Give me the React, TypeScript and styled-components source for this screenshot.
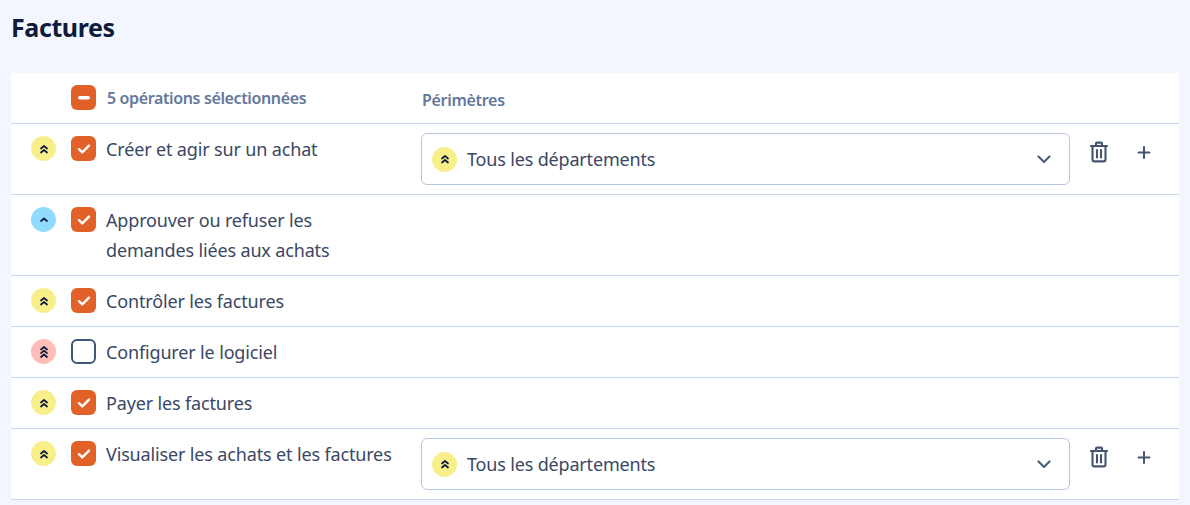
import React from "react";
import styled, { createGlobalStyle } from "styled-components";

const Global = createGlobalStyle`
  html, body { margin: 0; padding: 0; background: #f3f6ff; }
  body { font-family: "Noto Sans", "Liberation Sans", sans-serif; overflow: hidden; }
`;

const Page = styled.div`
  height: 505px;
  padding: 0 11px;
  box-sizing: border-box;
  background: #f3f6ff;
  overflow: hidden;
`;

const Title = styled.h1`
  margin: 0;
  height: 73px;
  padding: 11px 0 0;
  box-sizing: border-box;
  font-family: "Noto Sans", sans-serif;
  font-size: 25px;
  line-height: 32px;
  font-weight: 700;
  letter-spacing: -0.4px;
  color: #0e1b3d;
`;

const Card = styled.div`
  background: #fff;
`;

const Row = styled.div<{ $h: number }>`
  display: grid;
  grid-template-columns: 25px 25px 340px 649px 1fr;
  height: ${(p) => p.$h}px;
  box-sizing: border-box;
  border-bottom: 1px solid #c9d7ee;
  padding: 12px 0 0 20px;
  color: #3a4864;
`;

const Badge = styled.span<{ $c: string }>`
  grid-column: 1;
  width: 25px;
  height: 25px;
  border-radius: 50%;
  background: ${(p) => p.$c};
  display: flex;
  align-items: center;
  justify-content: center;
  flex: none;
`;

const Check = styled.span<{ $on?: boolean }>`
  grid-column: 2;
  margin-left: 15px;
  width: 25px;
  height: 25px;
  box-sizing: border-box;
  border-radius: 6px;
  background: ${(p) => (p.$on ? "#e26128" : "#fff")};
  border: ${(p) => (p.$on ? "none" : "2px solid #3f5678")};
  display: flex;
  align-items: center;
  justify-content: center;
`;

const Label = styled.div`
  grid-column: 3;
  padding-left: 25px;
  font-size: 18px;
  line-height: 30px;
  margin-top: -2px;
  letter-spacing: -0.15px;
  color: #3a4864;
  white-space: nowrap;
`;

const Muted = styled(Label)`
  padding-left: 26px;
  font-size: 16px;
  font-weight: 600;
  line-height: 26px;
  margin-top: 0;
  letter-spacing: -0.37px;
  color: #64789c;
`;

const Head = styled(Muted)`
  grid-column: 4;
  padding-left: 1px;
  margin-top: 2px;
  letter-spacing: -0.3px;
`;

const Select = styled.div`
  grid-column: 4;
  margin-top: -3px;
  height: 52px;
  box-sizing: border-box;
  border: 1px solid #b7c7e2;
  border-radius: 6px;
  display: flex;
  align-items: center;
  padding: 0 18px 0 10px;
  gap: 10px;
  font-size: 18px;
  letter-spacing: -0.17px;
  color: #3a4864;
`;

const SelectText = styled.span`
  flex: 1;
`;

const Actions = styled.div`
  grid-column: 5;
  display: flex;
  align-items: center;
  align-self: start;
  height: 26px;
  margin-top: 3px;
  padding-left: 20px;
  gap: 29px;
`;

const Chev = ({ n }: { n: 1 | 2 | 3 }) => (
  <svg width="12" height="14" viewBox="0 0 12 14" fill="none" stroke="#0e1b3d" strokeWidth="1.7" strokeLinecap="round" strokeLinejoin="round">
    {n === 1 && <path d="M3 8 6 5.5 9 8" />}
    {n === 2 && <><path d="M3 6.5 6 4 9 6.5" /><path d="M3 10.5 6 8 9 10.5" /></>}
    {n === 3 && <><path d="M3 4.5 6 2 9 4.5" /><path d="M3 8.2 6 5.7 9 8.2" /><path d="M3 12 6 9.5 9 12" /></>}
  </svg>
);

const Tick = () => (
  <svg width="14" height="12" viewBox="0 0 14 12" fill="none" stroke="#fff" strokeWidth="2.4" strokeLinecap="round" strokeLinejoin="round">
    <path d="M2 6.2 5.3 9.4 12 2.6" />
  </svg>
);

const Trash = () => (
  <svg width="18" height="22" viewBox="0 0 18 22" fill="none" stroke="#44546f" strokeWidth="2.1" strokeLinecap="round" strokeLinejoin="round">
    <path d="M1 5h16" />
    <path d="M6 4.5V2.6C6 2 6.4 1.6 7 1.6h4c.6 0 1 .4 1 1v1.9" />
    <path d="M2.5 5.5v13c0 1.1.8 1.9 1.9 1.9h9.2c1.1 0 1.9-.8 1.9-1.9v-13" />
    <path d="M7 9v7.5M11 9v7.5" />
  </svg>
);

const Plus = () => (
  <svg width="14" height="16" viewBox="0 0 14 16" fill="none" stroke="#44546f" strokeWidth="2" strokeLinecap="round">
    <path d="M7 3v11M1.5 8.5h11" />
  </svg>
);

const Caret = () => (
  <svg width="14" height="9" viewBox="0 0 14 9" fill="none" stroke="#51627f" strokeWidth="2.2" strokeLinecap="round" strokeLinejoin="round">
    <path d="M1.5 1.5 7 7l5.5-5.5" />
  </svg>
);

const YEL = "#f9ef8a";
const BLUE = "#90dcff";
const RED = "#ffbdb8";

const Scope = () => (
  <>
    <Select>
      <Badge $c={YEL}><Chev n={2} /></Badge>
      <SelectText>Tous les départements</SelectText>
      <Caret />
    </Select>
    <Actions><Trash /><Plus /></Actions>
  </>
);

const rows = [
  { h: 71, c: YEL, n: 2 as const, on: true, t: "Créer et agir sur un achat", scope: true },
  { h: 81, c: BLUE, n: 1 as const, on: true, t: <>Approuver ou refuser les<br />demandes liées aux achats</>, scope: false },
  { h: 51, c: YEL, n: 2 as const, on: true, t: "Contrôler les factures", scope: false },
  { h: 51, c: RED, n: 3 as const, on: false, t: "Configurer le logiciel", scope: false },
  { h: 51, c: YEL, n: 2 as const, on: true, t: "Payer les factures", scope: false },
  { h: 71, c: YEL, n: 2 as const, on: true, t: "Visualiser les achats et les factures", scope: true },
];

export default function App() {
  return (
    <Page>
      <Global />
      <Title>Factures</Title>
      <Card>
        <Row $h={51}>
          <Check $on>
            <svg width="12" height="4" viewBox="0 0 12 4"><rect width="12" height="3.4" rx="1.7" fill="#fff" /></svg>
          </Check>
          <Muted>5 opérations sélectionnées</Muted>
          <Head>Périmètres</Head>
        </Row>
        {rows.map((r, i) => (
          <Row key={i} $h={r.h}>
            <Badge $c={r.c}><Chev n={r.n} /></Badge>
            <Check $on={r.on}>{r.on && <Tick />}</Check>
            <Label>{r.t}</Label>
            {r.scope && <Scope />}
          </Row>
        ))}
      </Card>
    </Page>
  );
}
